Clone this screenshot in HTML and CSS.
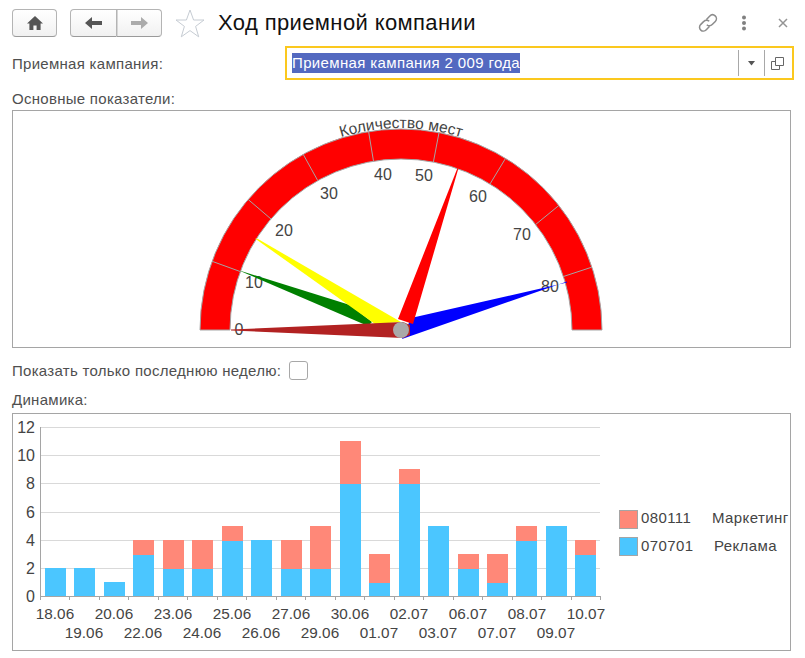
FILE: index.html
```html
<!DOCTYPE html>
<html>

<head>
    <meta http-equiv="Content-Type" content="text/html; charset=utf-8">
    <title>Ход приемной компании</title>

    <link rel="stylesheet" href="styles.css">
</head>

<body>
    <div class="header">
        <button class="btn btn-home">
            <svg width="18" height="16" viewBox="0 0 18 16"><path class="icon-dark" d="M9 1 L17 8.5 H14.6 V15 H10.6 V10.5 H7.4 V15 H3.4 V8.5 H1 Z"/></svg>
        </button>
        <div class="btn-group">
            <button class="btn btn-nav">
                <svg width="19" height="14" viewBox="0 0 19 14"><path class="icon-dark" d="M8 1 V5 H18 V9 H8 V13 L1 7 Z"/></svg>
            </button>
            <button class="btn btn-nav">
                <svg width="19" height="14" viewBox="0 0 19 14"><path class="icon-light" d="M11 1 V5 H1 V9 H11 V13 L18 7 Z"/></svg>
            </button>
        </div>
        <svg class="star" width="30" height="29" viewBox="0 0 30 29"><path d="M15 1 L18.6 11 H29 L20.6 17.4 L23.7 27.8 L15 21.6 L6.3 27.8 L9.4 17.4 L1 11 H11.4 Z"/></svg>
        <h1 class="title">Ход приемной компании</h1>
        <div class="header-tools">
            <svg width="20" height="20" viewBox="0 0 20 20"><path class="icon-line" d="M8.5 6.5 L11.6 3.2 C13.2 1.5 15.6 1.4 17.2 2.9 C18.8 4.4 18.8 6.8 17.3 8.4 L14.2 11.6 C12.7 13.2 10.3 13.2 8.8 11.7 M11.4 13.5 L8.3 16.8 C6.8 18.4 4.4 18.6 2.8 17.1 C1.2 15.6 1.1 13.2 2.6 11.6 L5.8 8.4 C7.3 6.8 9.7 6.8 11.2 8.3"/></svg>
            <svg class="tool-dots" width="6" height="16" viewBox="0 0 6 16"><circle cx="3" cy="2.5" r="2"/><circle cx="3" cy="8" r="2"/><circle cx="3" cy="13.5" r="2"/></svg>
            <svg class="tool-close" width="10" height="10" viewBox="0 0 10 10"><path d="M1 1 L9 9 M9 1 L1 9"/></svg>
        </div>
    </div>

    <div class="field-row">
        <label class="label">Приемная кампания:</label>
        <div class="field">
            <span class="field-value">Приемная кампания 2 009 года</span>
            <span class="field-btn">
                <svg width="8" height="5" viewBox="0 0 8 5"><path class="icon-dark" d="M0 0 H7 L3.5 4.5 Z"/></svg>
            </span>
            <span class="field-btn field-btn-open">
                <svg width="13" height="13" viewBox="0 0 13 13"><path class="icon-open" d="M4.5 .5 H12.5 V8.5 H4.5 Z M4.5 4.5 H.5 V12.5 H8.5 V8.5"/></svg>
            </span>
        </div>
    </div>

    <div class="section-label">Основные показатели:</div>
    <div class="panel panel-gauge">
        <svg class="canvas" width="779" height="238" viewBox="12 110 779 238">
            <!-- шкала: 0..89 на полукруге -->
            <path class="ring" d="M200 330 A201 201 0 0 1 602 330 H572 A171 171 0 0 0 230 330 Z"/>
            <g class="ring-ticks">
                <line x1="212.1" y1="261.3" x2="240.4" y2="271.6"/>
                <line x1="248.3" y1="199.6" x2="271" y2="219"/>
                <line x1="303.2" y1="154.3" x2="317.7" y2="180.5"/>
                <line x1="368.6" y1="131.6" x2="373.5" y2="161.2"/>
                <line x1="439" y1="132.6" x2="433.4" y2="162"/>
                <line x1="505.5" y1="158.4" x2="490" y2="184"/>
                <line x1="558.6" y1="205.7" x2="535.5" y2="224.6"/>
                <line x1="591.4" y1="267.3" x2="563.4" y2="276.5"/>
            </g>
            <g class="scale-text">
                <text x="239" y="335">0</text>
                <text x="254" y="288">10</text>
                <text x="284" y="236">20</text>
                <text x="329" y="199">30</text>
                <text x="383" y="180">40</text>
                <text x="424" y="181">50</text>
                <text x="478" y="202">60</text>
                <text x="522" y="240">70</text>
                <text x="550" y="292">80</text>
            </g>
            <path id="title-arc" class="arc-path" d="M300 155 A203 203 0 0 1 502 155"/>
            <text class="gauge-title"><textPath href="#title-arc" startOffset="50%">Количество мест</textPath></text>

            <polygon class="needle-blue" points="567,281.5 567,282.5 411,318 402,339"/>
            <polygon class="needle-green" points="239,270.5 241,271 350,305 372,322 368,326"/>
            <polygon class="needle-yellow" points="255,238.5 258,239 401,322 375,324"/>
            <polygon class="needle-red" points="457.5,168 458.5,168 413,324 398,319"/>
            <polygon class="needle-brown" points="231,329.5 231,330.5 403,338 410,335 410,325 403,322"/>
            <circle class="hub" cx="401" cy="330" r="8"/>
        </svg>
    </div>

    <div class="check-row">
        <label class="label">Показать только последнюю неделю:</label>
        <span class="checkbox"></span>
    </div>

    <div class="section-label section-label-chart">Динамика:</div>
    <div class="panel panel-chart">
        <svg class="canvas" width="779" height="238" viewBox="12 413 779 238">
            <g class="grid">
                <line x1="40" y1="427.5" x2="600" y2="427.5"/>
                <line x1="40" y1="455.5" x2="600" y2="455.5"/>
                <line x1="40" y1="483.5" x2="600" y2="483.5"/>
                <line x1="40" y1="512.5" x2="600" y2="512.5"/>
                <line x1="40" y1="540.5" x2="600" y2="540.5"/>
                <line x1="40" y1="568.5" x2="600" y2="568.5"/>
            </g>
            <g class="axis-y">
                <text x="35" y="433">12</text>
                <text x="35" y="461">10</text>
                <text x="35" y="489">8</text>
                <text x="35" y="518">6</text>
                <text x="35" y="546">4</text>
                <text x="35" y="574">2</text>
                <text x="35" y="602">0</text>
            </g>

            <g class="bar-top">
                <rect x="133" y="540" width="21" height="15"/>
                <rect x="163" y="540" width="21" height="29"/>
                <rect x="192" y="540" width="21" height="29"/>
                <rect x="222" y="526" width="21" height="15"/>
                <rect x="281" y="540" width="21" height="29"/>
                <rect x="310" y="526" width="21" height="43"/>
                <rect x="340" y="441" width="21" height="43"/>
                <rect x="369" y="554" width="21" height="29"/>
                <rect x="399" y="469" width="21" height="15"/>
                <rect x="458" y="554" width="21" height="15"/>
                <rect x="487" y="554" width="21" height="29"/>
                <rect x="516" y="526" width="21" height="15"/>
                <rect x="575" y="540" width="21" height="15"/>
            </g>
            <g class="bar-bottom">
                <rect x="45" y="568" width="21" height="28"/>
                <rect x="74" y="568" width="21" height="28"/>
                <rect x="104" y="582" width="21" height="14"/>
                <rect x="133" y="555" width="21" height="41"/>
                <rect x="163" y="569" width="21" height="27"/>
                <rect x="192" y="569" width="21" height="27"/>
                <rect x="222" y="541" width="21" height="55"/>
                <rect x="251" y="540" width="21" height="56"/>
                <rect x="281" y="569" width="21" height="27"/>
                <rect x="310" y="569" width="21" height="27"/>
                <rect x="340" y="484" width="21" height="112"/>
                <rect x="369" y="583" width="21" height="13"/>
                <rect x="399" y="484" width="21" height="112"/>
                <rect x="428" y="526" width="21" height="70"/>
                <rect x="458" y="569" width="21" height="27"/>
                <rect x="487" y="583" width="21" height="13"/>
                <rect x="516" y="541" width="21" height="55"/>
                <rect x="546" y="526" width="21" height="70"/>
                <rect x="575" y="555" width="21" height="41"/>
            </g>

            <path class="axis-line" d="M40.5 427 V600 M40 596.5 H601 M69.5 596 V600 M99.5 596 V600 M128.5 596 V600 M158.5 596 V600 M187.5 596 V600 M217.5 596 V600 M246.5 596 V600 M276.5 596 V600 M305.5 596 V600 M335.5 596 V600 M364.5 596 V600 M394.5 596 V600 M423.5 596 V600 M453.5 596 V600 M482.5 596 V600 M512.5 596 V600 M541.5 596 V600 M571.5 596 V600 M600.5 596 V600"/>

            <g class="axis-x">
                <text x="55" y="619">18.06</text>
                <text x="84" y="638">19.06</text>
                <text x="114" y="619">20.06</text>
                <text x="143" y="638">22.06</text>
                <text x="173" y="619">23.06</text>
                <text x="202" y="638">24.06</text>
                <text x="232" y="619">25.06</text>
                <text x="261" y="638">26.06</text>
                <text x="291" y="619">27.06</text>
                <text x="320" y="638">29.06</text>
                <text x="350" y="619">30.06</text>
                <text x="379" y="638">01.07</text>
                <text x="409" y="619">02.07</text>
                <text x="438" y="638">03.07</text>
                <text x="468" y="619">06.07</text>
                <text x="497" y="638">07.07</text>
                <text x="527" y="619">08.07</text>
                <text x="556" y="638">09.07</text>
                <text x="586" y="619">10.07</text>
            </g>

            <rect class="legend-top" x="619.5" y="510.5" width="18" height="18"/>
            <rect class="legend-bottom" x="619.5" y="537.5" width="18" height="18"/>
            <g class="legend-text">
                <text x="641" y="523">080111</text>
                <text x="712" y="523">Маркетинг</text>
                <text x="641" y="551">070701</text>
                <text x="714" y="551">Реклама</text>
            </g>
        </svg>
    </div>
</body>

</html>
```

FILE: styles.css
```css
* {
    box-sizing: border-box;
}

body {
    margin: 0;
    padding: 9px 14px 0 12px;
    width: 805px;
    height: 658px;
    overflow: hidden;
    background: white;
    font-family: "Liberation Sans", Arial, sans-serif;
    font-size: 15px;
    letter-spacing: .28px;
    color: #4f4f4f;
}

/* шапка */

.header {
    display: flex;
    align-items: center;
    height: 28px;
}

.btn {
    display: flex;
    align-items: center;
    justify-content: center;
    height: 28px;
    padding: 0;
    border: 1px solid #b4b4b4;
    border-bottom-color: #9a9a9a;
    border-radius: 4px;
    background: linear-gradient(#ffffff, #f1f1f1);
}

.btn-home {
    width: 45px;
}

.btn-group {
    display: flex;
    margin-left: 13px;
}

.btn-nav {
    width: 47px;
    border-radius: 4px 0 0 4px;
}

.btn-nav + .btn-nav {
    width: 45px;
    border-left: 0;
    border-radius: 0 4px 4px 0;
    box-shadow: inset 1px 0 0 #d6d6d6;
}

.icon-dark {
    fill: #555555;
}

.icon-light {
    fill: #ababab;
}

.star {
    margin-left: 13px;
    flex: none;
}

.star path {
    fill: white;
    stroke: #c6ccd3;
    stroke-width: 1;
}

.title {
    margin: 0 0 0 13px;
    font-size: 22px;
    font-weight: normal;
    letter-spacing: .38px;
    color: #111111;
}

.header-tools {
    display: flex;
    align-items: center;
    margin-left: auto;
    margin-right: 3px;
}

.icon-line {
    fill: none;
    stroke: #8c8c8c;
    stroke-width: 1.5;
}

.tool-dots {
    margin-left: 23px;
    fill: #808080;
}

.tool-close {
    margin-left: 31px;
    stroke: #949494;
    stroke-width: 1.5;
}

/* поле выбора */

.field-row {
    display: flex;
    align-items: center;
    margin-top: 9px;
    height: 34px;
}

.label {
    flex: none;
}

.field-row .label {
    width: 273px;
}

.field {
    display: flex;
    flex: none;
    align-items: center;
    width: 509px;
    height: 34px;
    padding: 0 0 0 5px;
    border: 2px solid #fbc81e;
}

.field-value {
    margin-right: auto;
    padding: 0 0 1px;
    background: #5369c0;
    color: white;
    letter-spacing: .36px;
    line-height: 19px;
}

.field-btn {
    display: flex;
    align-items: center;
    justify-content: center;
    width: 26px;
    height: 26px;
    border-left: 1px solid #a8a8a8;
}

.field-btn-open {
    width: 28px;
    padding-right: 2px;
}

.icon-open {
    fill: none;
    stroke: #666666;
}

/* подписи и панели */

.section-label {
    margin-top: 10px;
    line-height: 17px;
    height: 20px;
}

.section-label-chart {
    margin-top: 13px;
    height: 14px;
    line-height: 14px;
}

.panel {
    width: 779px;
    height: 238px;
    border: 1px solid #a5a5a5;
    position: relative;
    overflow: hidden;
}

.panel-chart {
    margin-top: 6px;
}

.canvas {
    display: block;
    position: absolute;
    top: -1px;
    left: -1px;
    letter-spacing: 0;
}

.check-row {
    display: flex;
    align-items: center;
    height: 20px;
    margin-top: 12px;
}

.checkbox {
    width: 19px;
    height: 19px;
    margin-left: 8px;
    border: 1px solid #a8a8a8;
    border-radius: 3px;
}

/* круговая шкала */

.ring {
    fill: #ff0000;
    stroke: #a5a5a5;
    stroke-width: 1;
}

.ring-ticks line {
    stroke: #a5a5a5;
    stroke-width: 1;
}

.scale-text text {
    font-size: 16px;
    fill: #444444;
    text-anchor: middle;
}

.axis-x text {
    font-size: 15.3px;
    fill: #444444;
    text-anchor: middle;
}

.arc-path {
    fill: none;
}

.gauge-title {
    font-size: 15.5px;
    fill: #444444;
    text-anchor: middle;
}

.needle-blue {
    fill: #0000ff;
}

.needle-green {
    fill: #008000;
}

.needle-yellow {
    fill: #ffff00;
}

.needle-red {
    fill: #ff0000;
}

.needle-brown {
    fill: #b22222;
}

.hub {
    fill: #a9a9a9;
}

/* диаграмма */

.grid line {
    stroke: #d9d9d9;
    stroke-width: 1;
}

.axis-y text {
    font-size: 16px;
    fill: #444444;
    text-anchor: end;
}

.axis-line {
    fill: none;
    stroke: #a5a5a5;
    stroke-width: 1;
}

.bar-top rect {
    fill: #ff8878;
}

.bar-bottom rect {
    fill: #4bc6ff;
}

.legend-top,
.legend-bottom {
    stroke: #a5a5a5;
    stroke-width: 1;
}

.legend-top {
    fill: #ff8878;
}

.legend-bottom {
    fill: #4bc6ff;
}

.legend-text text {
    font-size: 15px;
    letter-spacing: .4px;
    fill: #444444;
}
```
